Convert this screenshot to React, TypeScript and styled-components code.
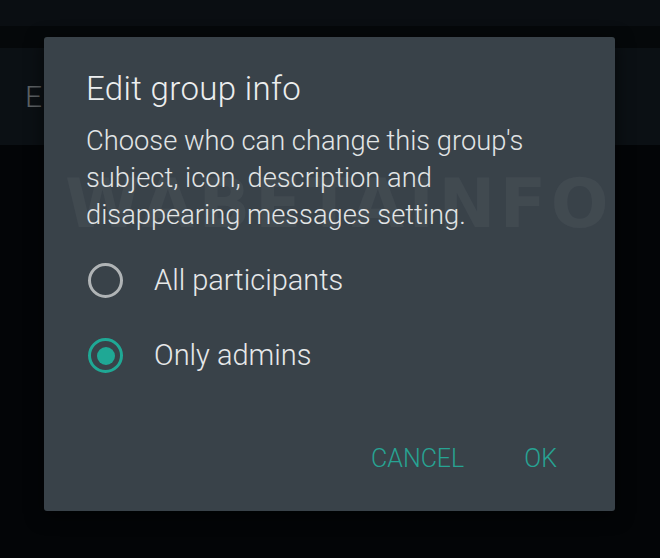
import React from 'react';
import styled, { createGlobalStyle } from 'styled-components';

const GlobalStyle = createGlobalStyle`
  html, body {
    margin: 0;
    padding: 0;
    background: #030507;
  }
  body {
    font-family: Roboto, 'Liberation Sans', Arial, sans-serif;
  }
`;

const Screen = styled.div`
  position: relative;
  width: 660px;
  height: 558px;
  overflow: hidden;
  background: #030507;
  display: flex;
  flex-direction: column;
`;

const Toolbar = styled.div`
  height: 26px;
  background: #0a0e12;
`;

const Gap = styled.div`
  height: 22px;
  background: #05080a;
`;

const Section = styled.div`
  height: 97px;
  background: #0b1014;
  display: flex;
  align-items: center;
  padding-left: 25px;
  color: #5c6164;
  font-size: 30px;
  font-weight: 300;
`;

const Dialog = styled.div`
  position: absolute;
  left: 44px;
  top: 37px;
  width: 571px;
  height: 474px;
  box-sizing: border-box;
  background: #394249;
  border-radius: 3px;
  box-shadow: 0 4px 18px rgba(0, 0, 0, 0.6);
  padding: 32px 46px 29px 42px;
  display: flex;
  flex-direction: column;
  overflow: hidden;
`;

const Watermark = styled.div`
  position: absolute;
  left: 21px;
  top: 127px;
  font-family: 'DejaVu Sans', sans-serif;
  font-weight: 700;
  font-size: 68px;
  letter-spacing: 4.5px;
  color: rgba(255, 255, 255, 0.045);
  pointer-events: none;
  user-select: none;
`;

const Title = styled.h1`
  position: relative;
  margin: 0;
  font-size: 33px;
  line-height: 40px;
  font-weight: 300;
  letter-spacing: 0.35px;
  color: #eceeef;
`;

const Message = styled.p`
  position: relative;
  margin: 14px 0 9px;
  font-size: 27.3px;
  line-height: 37px;
  font-weight: 300;
  color: #e2e5e6;
`;

const Option = styled.label`
  position: relative;
  height: 75px;
  display: flex;
  align-items: center;
  gap: 31px;
  padding-left: 2px;
  font-size: 29px;
  font-weight: 300;
  line-height: 1;
  color: #e6e8e9;
`;

const Radio = styled.span<{ checked: boolean }>`
  box-sizing: border-box;
  width: 35px;
  height: 35px;
  border-radius: 50%;
  border: ${(p) => (p.checked ? '3.5px solid #1fa895' : '3px solid #b0b4b6')};
  display: flex;
  align-items: center;
  justify-content: center;

  &::after {
    content: '';
    display: ${(p) => (p.checked ? 'block' : 'none')};
    width: 18px;
    height: 18px;
    border-radius: 50%;
    background: #1fa895;
  }
`;

const Actions = styled.div`
  margin-top: auto;
  display: flex;
  justify-content: flex-end;
  gap: 36px;
`;

const Button = styled.button`
  height: 48px;
  padding: 0 12px;
  border: none;
  background: transparent;
  font-family: Roboto, 'Liberation Sans', Arial, sans-serif;
  font-size: 25px;
  font-weight: 300;
  color: #27a393;
  cursor: pointer;
`;

export default function App(): React.ReactElement {
  const [choice, setChoice] = React.useState<'all' | 'admins'>('admins');

  return (
    <Screen>
      <GlobalStyle />
      <Toolbar />
      <Gap />
      <Section>E</Section>
      <Dialog>
        <Watermark aria-hidden>WABETAINFO</Watermark>
        <Title>Edit group info</Title>
        <Message>
          Choose who can change this group's subject, icon, description and
          disappearing messages setting.
        </Message>
        <Option onClick={() => setChoice('all')}>
          <Radio checked={choice === 'all'} />
          All participants
        </Option>
        <Option onClick={() => setChoice('admins')}>
          <Radio checked={choice === 'admins'} />
          Only admins
        </Option>
        <Actions>
          <Button>CANCEL</Button>
          <Button>OK</Button>
        </Actions>
      </Dialog>
    </Screen>
  );
}
